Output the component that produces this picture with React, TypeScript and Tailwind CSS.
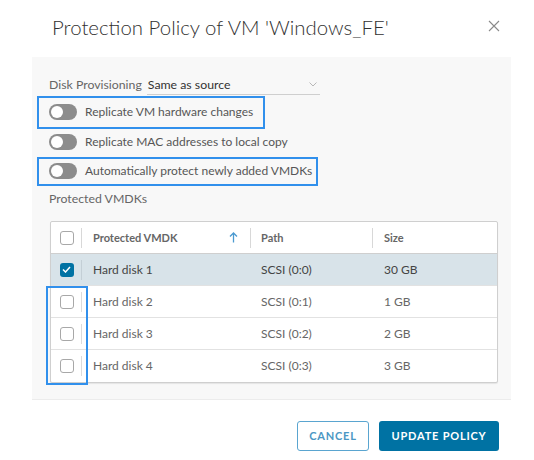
import React from "react";

const font = { fontFamily: "Lato, 'Open Sans', sans-serif" };

function Toggle() {
  return (
    <span className="relative inline-block w-[28px] h-[16px] rounded-full bg-[#8c8c8c] shrink-0">
      <span className="absolute left-[2px] top-[2px] w-[12px] h-[12px] rounded-full bg-white" />
    </span>
  );
}

function Checkbox({ checked }: { checked?: boolean }) {
  return checked ? (
    <span className="w-[14px] h-[14px] rounded-[3px] bg-[#0072a3] flex items-center justify-center">
      <svg width="9" height="7" viewBox="0 0 9 7" fill="none">
        <path d="M1 3.5 L3.5 6 L8 1" stroke="white" strokeWidth="1.5" />
      </svg>
    </span>
  ) : (
    <span className="w-[14px] h-[14px] rounded-[3px] border border-[#a8a8a8] bg-white" />
  );
}

const rows = [
  { name: "Hard disk 1", path: "SCSI (0:0)", size: "30 GB", checked: true },
  { name: "Hard disk 2", path: "SCSI (0:1)", size: "1 GB" },
  { name: "Hard disk 3", path: "SCSI (0:2)", size: "2 GB" },
  { name: "Hard disk 4", path: "SCSI (0:3)", size: "3 GB" },
];

export default function App() {
  return (
    <div className="w-[534px] h-[460px] bg-white relative overflow-hidden" style={font}>
      <div className="h-[57px] flex items-center justify-between pl-[52px] pr-[34px] pb-[2px]">
        <h1 className="text-[20.4px] font-light text-[#313131]">
          Protection Policy of VM 'Windows_FE'
        </h1>
        <svg width="12" height="12" viewBox="0 0 12 12" className="mb-[3px]">
          <path d="M1 1 L11 11 M11 1 L1 11" stroke="#8a8a8a" strokeWidth="1.1" />
        </svg>
      </div>

      <div className="ml-[32px] w-[479px] h-[343px] bg-[#f8f8f8] border-b border-[#ececec] pt-[17px] pl-[17px] pr-[13px] text-[12px] leading-[16px] text-[#565656]">
        <div className="h-[20px] flex items-center text-[12.3px] pt-[2px]">
          <span className="text-[#666]">Disk Provisioning</span>
          <div className="ml-[5px] w-[173px] h-[20px] border-b border-[#cfcfcf] flex items-center justify-between pr-[3px]">
            <span className="text-[#333] pl-[1px]">Same as source</span>
            <svg width="8" height="5" viewBox="0 0 8 5">
              <path d="M0.5 0.5 L4 4 L7.5 0.5" stroke="#b8b8b8" fill="none" />
            </svg>
          </div>
        </div>

        <div className="relative mt-[3px] h-[30px] flex items-center gap-[8px]">
          <Toggle />
          <span>Replicate VM hardware changes</span>
          <span className="absolute left-[-12px] top-[-1px] w-[228px] h-[33px] border-2 border-[#3190ec]" />
        </div>
        <div className="h-[29px] flex items-center gap-[8px]">
          <Toggle />
          <span>Replicate MAC addresses to local copy</span>
        </div>
        <div className="relative h-[30px] flex items-center gap-[8px]">
          <Toggle />
          <span>Automatically protect newly added VMDKs</span>
          <span className="absolute left-[-12px] top-[1px] w-[281px] h-[29px] border-2 border-[#3190ec]" />
        </div>
        <div className="mt-[4px] h-[18px] flex items-center text-[#666] text-[12.3px]">Protected VMDKs</div>

        <div className="relative mt-[13px] ml-[1px] w-[448px] border border-[#cfcfcf] bg-white rounded-[2px] shadow-[0_1px_1px_rgba(0,0,0,0.08)]">
          <div className="h-[32px] flex items-center text-[11px] font-bold text-[#666] border-b border-[#cfcfcf]">
            <div className="w-[31px] h-full flex items-center justify-center relative">
              <Checkbox />
              <span className="absolute right-0 top-[6px] h-[20px] border-r border-[#d8d8d8]" />
            </div>
            <div className="w-[169px] h-full flex items-center justify-between pl-[11px] pr-[13px] relative">
              <span>Protected VMDK</span>
              <svg width="9" height="11" viewBox="0 0 9 11">
                <path d="M4.5 10.5 V1.5 M1 4.5 L4.5 1 L8 4.5" stroke="#4c9ad0" strokeWidth="1.3" fill="none" />
              </svg>
              <span className="absolute right-0 top-[6px] h-[20px] border-r border-[#d8d8d8]" />
            </div>
            <div className="w-[122px] h-full flex items-center pl-[10px] relative">
              <span>Path</span>
              <span className="absolute right-0 top-[6px] h-[20px] border-r border-[#d8d8d8]" />
            </div>
            <div className="flex-1 h-full flex items-center pl-[11px]">Size</div>
          </div>
          {rows.map((r, i) => (
            <div
              key={r.name}
              className={`h-[32px] flex items-center text-[12px] ${r.checked ? "bg-[#d8e3e9] text-[#444]" : "text-[#666]"} ${i < rows.length - 1 ? "border-b border-[#e2e2e2]" : ""}`}
            >
              <div className="w-[31px] h-full flex items-center justify-center relative">
                <Checkbox checked={r.checked} />
                <span className={`absolute right-0 top-[6px] h-[20px] border-r ${r.checked ? "border-[#c4cfd6]" : "border-[#dcdcdc]"}`} />
              </div>
              <div className="w-[169px] pl-[11px]">{r.name}</div>
              <div className="w-[122px] pl-[10px]">{r.path}</div>
              <div className="flex-1 pl-[11px]">{r.size}</div>
            </div>
          ))}
          <span className="absolute left-[-5px] top-[64px] w-[42px] h-[99px] border-2 border-[#3190ec]" />
        </div>
      </div>

      <div className="flex justify-end gap-[10px] pr-[35px] mt-[21px]">
        <button className="w-[72px] h-[30px] rounded-[3px] border border-[#5aa5d0] text-[#4b97c4] text-[11px] font-bold tracking-[0.8px] bg-white">
          CANCEL
        </button>
        <button className="w-[120px] h-[30px] rounded-[3px] bg-[#0072a3] text-white text-[11px] font-bold tracking-[0.8px]">
          UPDATE POLICY
        </button>
      </div>
    </div>
  );
}
